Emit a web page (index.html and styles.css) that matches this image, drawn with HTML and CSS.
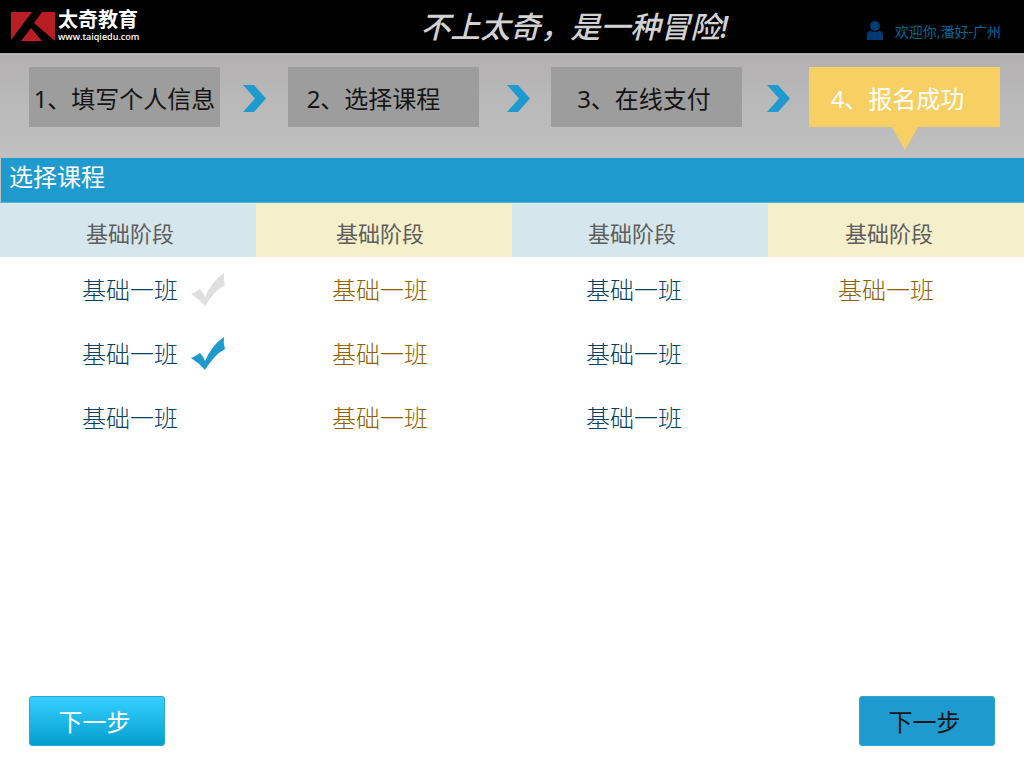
FILE: index.html
```html
<!DOCTYPE html>
<html lang="zh-CN">
<head>
<meta charset="utf-8">
<meta name="viewport" content="width=device-width, initial-scale=1">
<title>太奇教育 - 选择课程</title>
<link rel="stylesheet" href="styles.css">
</head>
<body>
<header class="topbar">
  <a class="brand" href="#">
    <svg class="brand-mark" viewBox="0 0 44 29" aria-hidden="true">
      <path fill="#b81f25" d="M0 0H21L0 28ZM31 0H44V29L23 11ZM20 16L31 29H10Z"/>
    </svg>
    <span class="brand-text">
      <span class="brand-name">太奇教育</span>
      <span class="brand-url">www.taiqiedu.com</span>
    </span>
  </a>
  <p class="slogan">不上太奇，是一种冒险!</p>
  <a class="user" href="#">
    <svg class="user-icon" viewBox="0 0 16 19" aria-hidden="true">
      <circle cx="8" cy="5" r="5"/>
      <path d="M0 19V14Q0 10 4 10Q8 12 12 10Q16 10 16 14V19Z"/>
    </svg>
    <span>欢迎你,潘好-广州</span>
  </a>
</header>

<nav class="steps" aria-label="报名步骤">
  <div class="step step-long">1、填写个人信息</div>
  <svg class="arrow" viewBox="0 0 23 27" aria-hidden="true"><path d="M0 0H11L23 13.5L11 27H0L12 13.5Z"/></svg>
  <div class="step step-short">2、选择课程</div>
  <svg class="arrow arrow-late" viewBox="0 0 23 27" aria-hidden="true"><path d="M0 0H11L23 13.5L11 27H0L12 13.5Z"/></svg>
  <div class="step">3、在线支付</div>
  <svg class="arrow arrow-late" viewBox="0 0 23 27" aria-hidden="true"><path d="M0 0H11L23 13.5L11 27H0L12 13.5Z"/></svg>
  <div class="step step-short step-current" aria-current="step">4、报名成功</div>
</nav>

<main class="content">
  <h1 class="title">选择课程</h1>
  <table class="courses">
    <thead>
      <tr><th scope="col">基础阶段</th><th scope="col">基础阶段</th><th scope="col">基础阶段</th><th scope="col">基础阶段</th></tr>
    </thead>
    <tbody>
      <tr>
        <td><label class="course">基础一班<input class="check" type="checkbox"></label></td>
        <td>基础一班</td><td>基础一班</td><td>基础一班</td>
      </tr>
      <tr>
        <td><label class="course">基础一班<input class="check" type="checkbox" checked></label></td>
        <td>基础一班</td><td>基础一班</td><td></td>
      </tr>
      <tr><td>基础一班</td><td>基础一班</td><td>基础一班</td><td></td></tr>
    </tbody>
  </table>
</main>

<footer class="actions">
  <button class="btn btn-glossy" type="button">下一步</button>
  <button class="btn btn-flat" type="button">下一步</button>
</footer>
</body>
</html>
```
FILE: styles.css
```css
* { box-sizing: border-box; }

body {
  margin: 0;
  min-height: 100vh;
  display: flex;
  flex-direction: column;
  background: #fff;
  font-family: "Noto Sans", "Noto Sans CJK SC", sans-serif;
}

.topbar {
  display: grid;
  grid-template-columns: 3fr auto 2fr;
  align-items: center;
  height: 53px;
  padding: 0 23px 0 11px;
  background: #000;
}

.brand {
  display: flex;
  gap: 3px;
  align-items: center;
  color: #fff;
  text-decoration: none;
}
.brand-mark { width: 44px; height: 29px; }
.brand-text { display: flex; flex-direction: column; gap: 1px; }
.brand-name { font-size: 20px; line-height: 20px; font-weight: 700; }
.brand-url { font-family: "Open Sans", sans-serif; font-size: 9px; line-height: 12px; font-weight: 600; }

.slogan {
  margin: 0;
  color: #d2d2d2;
  font-size: 30px;
  line-height: 53px;
  font-style: italic;
  font-weight: 500;
}

.user {
  justify-self: end;
  display: flex;
  align-items: center;
  gap: 12px;
  padding-top: 10px;
  color: #006a96;
  font-size: 14px;
  line-height: 20px;
  text-decoration: none;
}
.user-icon { width: 16px; height: 19px; margin-bottom: 2px; fill: #003c73; }

.steps {
  display: grid;
  grid-template-columns: 191px 68fr 191px 72fr 191px 67fr 191px;
  justify-items: center;
  padding: 14px 24px 31px 29px;
  background: linear-gradient(#b3b0b1, #b8b8b8 40%, #c0c0c0);
}
.step {
  position: relative;
  width: 100%;
  height: 60px;
  padding-right: 5px;
  background: #9d9d9d;
  color: #151515;
  font-size: 24px;
  line-height: 64px;
  text-align: center;
  white-space: nowrap;
}
.step-long { padding-right: 0; }
.step-short { padding-right: 20px; }
.step-current { padding-right: 14px; background: #f7cf63; color: #fff; }
.step-current::after {
  content: "";
  position: absolute;
  top: 100%;
  left: 50%;
  margin-left: -13px;
  border: 13px solid transparent;
  border-top: 23px solid #f7cf63;
  border-bottom: 0;
}
.arrow { width: 23px; height: 27px; margin-top: 18px; fill: #1f9ace; }
.arrow-late { margin-left: 6px; }

.content { flex: 1; }
.title {
  margin: 0;
  height: 45px;
  padding-left: 8px;
  border-left: 1px solid #c0c0c0;
  border-bottom: 1px solid #5fb2d2;
  background: #1f9ace;
  color: #fff;
  font-size: 24px;
  line-height: 38px;
  font-weight: 400;
}

.courses {
  width: 100%;
  table-layout: fixed;
  border-collapse: collapse;
}
.courses th {
  height: 54px;
  padding: 6px 0 0 86px;
  background: #d5e6ed;
  color: #5e5e5e;
  font-size: 22px;
  line-height: 32px;
  font-weight: 400;
  text-align: left;
}
.courses th:nth-child(even) { background: #f5efca; }
.courses td {
  height: 64px;
  padding: 2px 0 0 82px;
  color: #00425e;
  font-size: 24px;
  line-height: 32px;
  font-weight: 300;
  white-space: nowrap;
}
.courses td:nth-child(even) { color: #8a6200; }
.courses th:nth-child(2) { padding-left: 80px; }
.courses td:nth-child(2) { padding-left: 76px; }
.courses th:nth-child(3) { padding-left: 76px; }
.courses td:nth-child(3) { padding-left: 74px; }
.courses th:nth-child(4) { padding-left: 77px; }
.courses td:nth-child(4) { padding-left: 70px; }

.course { display: flex; align-items: center; gap: 13px; height: 32px; }
.check {
  appearance: none;
  width: 34px;
  height: 34px;
  margin: 0;
  background: #dfdfdf;
  clip-path: path("M0 21Q5 19 9 16Q12 19 14 24Q21 8 33 0Q32 6 34 12Q23 18 14 33Q8 26 0 21Z");
}
.check:checked { background: #1f9ace; }

.actions {
  display: flex;
  justify-content: space-between;
  padding: 0 29px 22px;
}
.btn {
  width: 136px;
  height: 50px;
  padding: 0 5px 2px 0;
  border: 1px solid #2ba7d3;
  border-radius: 3px;
  font-family: inherit;
  font-size: 24px;
}
.btn-glossy { background: linear-gradient(#36d0ff, #039fcf); color: #fff; }
.btn-flat { background: #1f9ace; color: #151515; }
```
